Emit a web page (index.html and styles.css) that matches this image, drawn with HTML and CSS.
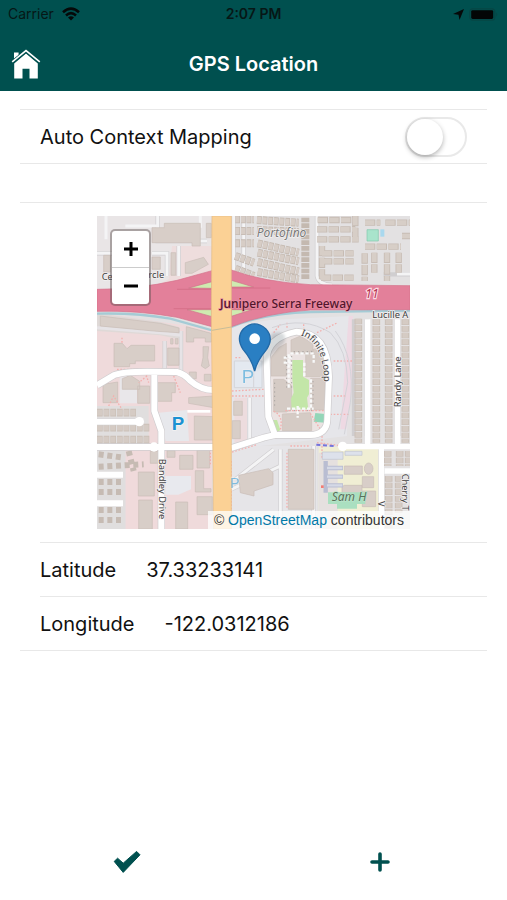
FILE: index.html
```html
<!DOCTYPE html>
<html lang="en">
<head>
<meta charset="utf-8">
<meta name="viewport" content="width=device-width, initial-scale=1">
<title>GPS Location</title>
<link rel="stylesheet" href="styles.css">
</head>
<body>
<header class="top">
  <div class="status">
    <div class="carrier">Carrier
      <svg width="18" height="14" viewBox="0 0 18 14" aria-hidden="true"><g fill="none" stroke="#050909" stroke-width="2.6"><path d="M1 5.2Q9-2 17 5.2"/><path d="M4 8.4Q9 4 14 8.4"/></g><path d="M6 10.4Q9 8 12 10.4L9 13.6z" fill="#050909"/></svg>
    </div>
    <time class="clock">2:07 PM</time>
    <div class="indicators">
      <svg width="13" height="13" viewBox="0 0 13 13" aria-hidden="true"><path d="M12 1L7.5 12 6.5 6.8 1 6z" fill="#050909"/></svg>
      <svg width="30" height="13" viewBox="0 0 30 13" aria-hidden="true"><rect x=".8" y=".8" width="25" height="11.4" rx="3" fill="none" stroke="#064544" stroke-width="1.2"/><rect x="2.2" y="2.2" width="22" height="8.8" rx="1.4" fill="#030606"/><path d="M27.3 4.4q2 2 0 4z" fill="#064544"/></svg>
    </div>
  </div>
  <nav class="nav">
    <a class="home" href="#" aria-label="Home">
      <svg width="30" height="30" viewBox="0 0 30 30" aria-hidden="true"><path d="M3 3.5h4.6v5L3 12z" fill="#fff"/><path d="M15 4.6L3.2 14.4v15h8.3v-9.6h7v9.6h8.3v-15z" fill="#fff"/><path d="M1.2 13.1L15 2l13.8 11.1" fill="none" stroke="#00504f" stroke-width="3.4"/><path d="M1.2 12.8L15 1.6l13.8 11.2" fill="none" stroke="#fff" stroke-width="1.6"/></svg>
    </a>
    <h1>GPS Location</h1>
  </nav>
</header>

<main class="content">
  <div class="row toggle-row">
    <label for="auto">Auto Context Mapping</label>
    <input class="switch" id="auto" type="checkbox" role="switch">
  </div>

  <section class="location">
    <div class="map">
      <svg class="tiles" viewBox="0 0 939 939" role="img" aria-label="Street map">
        <defs>
          <path id="loop-label" d="M611 358Q688 384 680 520"/>
        </defs>
        <rect width="939" height="939" fill="#e3e1e2"/>
        <!-- land use -->
        <path d="M0 0H343V220H0z" fill="#e9e5e6"/>
        <path d="M225 90H343V165L170 212 215 190z" fill="#eedddd"/>
        <path d="M0 290L345 340V939H85V690H0V640H150V580H0z" fill="#efdadb"/>
        <path d="M0 292L190 318 248 334V370L190 358 0 345z" fill="#dfd9d7"/>
        <path d="M0 570H155V690H85V939H0z" fill="#e0dede"/>
        <path d="M88 700H175V939H88z" fill="#f0dadb"/>
        <path d="M403 330L520 312 760 300 750 660 403 700z" fill="#e6e6ea"/>
        <path d="M403 690H660V939H403z" fill="#e6e5e8"/>
        <path d="M665 692H850V939H665z" fill="#f0eed4"/>
        <path d="M665 710H722V939H665z" fill="#e5e0df"/>
        <path d="M755 300H768V500L748 640H730z" fill="#eed9e3"/>
        <path d="M186 590L270 582 276 675H206z" fill="#e7e8ec"/>
        <path d="M205 780H282V820L244 836H205z" fill="#e8e9ee"/>
        <path d="M68 485Q95 470 120 500V562H68z" fill="#e9e7ea"/>
        <path d="M412 435H495V515H412z" fill="#e4e9f0" stroke="#d3d5da" stroke-width="3"/>
        <path d="M412 545H450V680H412z" fill="#eddcde"/>

        <!-- parking aisles -->
        <g fill="none" stroke="#d0ced0" stroke-width="13">
          <path d="M182 0V75H330M0 112H105M165 112H210V180M245 90V180"/>
          <path d="M410 0V170M440 0V180M660 0V180Q665 206 705 207M860 175H939M771 310V660M810 310V660M905 310V660M850 700V939M860 765H939"/>
          <path d="M550 700V939M650 690V939M415 790L530 700M403 820L550 750M252 345V470M203 375V470M458 545V680"/>
        </g>
        <g fill="none" stroke="#f4f4f5" stroke-width="9">
          <path d="M182 0V75H330M0 112H105M165 112H210V180M245 90V180M27 0V70M310 0V35M85 30H180"/>
          <path d="M410 0V170M440 0V180M660 0V180Q665 206 705 207M900 174H939"/>
          <path d="M550 700V939M650 690V939M415 790L530 700M403 820L550 750M458 545V680"/>
        </g>
        <g fill="none" stroke="#e6e3e6" stroke-width="9">
          <path d="M252 345V470M203 375V470M0 335L190 350 250 358"/>
        </g>

        <!-- buildings -->
        <g fill="#d8cec8" stroke="#c8bdb7" stroke-width="2">
          <path d="M202 22H310V90H285V80H165V35H202zM328 22H343V65H328z"/>
          <path d="M265 140L320 124 334 145 285 172 265 172zM165 123H190V160H165zM222 110H236V178H222zM20 118H40V168H20z"/>
          <path d="M10 300L190 322 246 336V350L180 346 10 330zM51 382H76L90 398 102 388H173V435H115V443H98V452H51zM212 396H246V448H212zM221 368H228V384H221zM235 368H243V384H235zM268 332L343 352V378H325V366H290V378H268zM318 392H335L332 425 337 450 325 458 313 450 318 425z"/>
          <path d="M18 505L62 498V560H18zM76 488L100 478 128 496V520H76zM122 510H158V562H122zM180 500H235V530H224V556H180zM275 545L350 540V575L275 562zM292 600L350 602V672H292zM277 468H298V488H277zM322 475H342V495H322z"/>
          <path d="M124 768H172V840H124zM125 852H166V939H125zM160 706H200V742H160zM210 704H234V724H210zM248 718H288V760H248zM300 702H338V756H300zM295 764H320V818H342V828H295zM300 842H346V896H300zM236 858H272V939H236z"/>
          <path d="M410 556H436V598H410zM406 614H430V668H406zM425 778L515 758 528 770V806L471 825V840L430 830z"/>
          <path d="M574 700H651V880H574zM556 623H643V645H556z"/>
          <ellipse cx="815" cy="758" rx="13" ry="17"/>
          <path d="M742 750H796V775H742zM742 808H795V830L768 865H735V812zM796 782H830V815H796zM796 825H836V872H796z"/>
        </g>

        <!-- house rows -->
        <g fill="none" stroke="#c4b9b0" stroke-width="24" stroke-dasharray="14 3">
          <path d="M480 12L605 20M480 42L605 48M482 82L605 110M482 110L605 136M482 138L605 166M482 168L605 190"/>
          <path d="M625 5V190M415 10H471M415 45H471M415 82H471M415 120L471 140M415 158L471 180"/>
        </g>
        <g fill="none" stroke="#d7cdc6" stroke-width="19" stroke-dasharray="12 5">
          <path d="M480 12L605 20M480 42L605 48M482 82L605 110M482 110L605 136M482 138L605 166M482 168L605 190"/>
          <path d="M415 10H471M415 45H471M415 82H471M415 120L471 140M415 158L471 180"/>
        </g>
        <g fill="none" stroke="#c7bcb4" stroke-width="19" stroke-dasharray="31 4">
          <path d="M662 12H770M660 40H775M660 70H785M675 112H770M675 136H770M672 185H770M775 0V75M804 92H912M804 20H850M865 20H939M675 90V190M803 112V195M832 110V170M870 110V195M905 110V170M915 60H939"/>
        </g>
        <g fill="none" stroke="#d7cec7" stroke-width="14" stroke-dasharray="28 7">
          <path d="M662 12H770M660 40H775M660 70H785M675 112H770M675 136H770M672 185H770M775 0V75M804 92H912M804 20H850M865 20H939M675 90V190M803 112V195M832 110V170M870 110V195M905 110V170M915 60H939"/>
        </g>
        <g fill="none" stroke="#cbc0b8" stroke-width="23" stroke-dasharray="17 3">
          <path d="M784 308V680M838 310V680M875 310V680M925 310V680M872 705V750M908 705V750M935 705V750M875 780V939M905 780V890M0 590H120M0 635H160M0 671H160"/>
        </g>
        <g fill="none" stroke="#d5cbc4" stroke-width="17" stroke-dasharray="15 5">
          <path d="M784 308V680M838 310V680M875 310V680M925 310V680M872 705V750M908 705V750M935 705V750M875 780V939M905 780V890M0 590H120M0 635H160M0 671H160"/>
        </g>
        <g fill="none" stroke="#c6bbb3" stroke-width="18" stroke-dasharray="15 11">
          <path d="M5 715L80 725M5 752L140 745M5 798H75M5 828H75M5 882H75M5 912H75M95 705L110 765"/>
        </g>

        <!-- campus -->
        <path d="M509 432Q520 365 599 347 690 350 696 482L689 622 659 652 534 657 514 602z" fill="#ebe3e2"/>
        <g fill="#d5cbc5" stroke="#cbc0ba" stroke-width="2">
          <path d="M522 425L545 395 568 382V480H522zM582 372L610 360 648 384V412H582zM626 412L655 398 680 425 684 482H626zM530 490H560L584 508V580L568 588H530zM641 487H684V582H641zM556 594L640 590 644 612V644H556z"/>
        </g>
        <path d="M586 432H618V482L636 492V535L630 545 634 580H584L582 548 590 530 586 490zM525 612H540L550 642 538 650 528 640z" fill="#c3e6a8"/>
        <g fill="none" stroke="#f8f9f9" stroke-width="7" stroke-dasharray="10 5">
          <path d="M575 415V520M560 425H590M580 412H650V440M622 440V480M642 490V575M570 578H650M602 570V605M560 440H590"/>
        </g>
        <g fill="none" stroke="#a9a4a2" stroke-width="3" stroke-dasharray="4 9">
          <path d="M569 420V520M584 420V520M590 407H648M648 495V570M577 584H645M533 500V575"/>
        </g>
        <path d="M655 591L684 594V620L650 617z" fill="#93d6b8"/>
        <path d="M810 41H844V75H810z" fill="#a9e4cc" stroke="#83c7ad" stroke-width="2"/>
        <path d="M850 40H862V62H850z" fill="#a9d8ee"/>

        <!-- footpaths -->
        <g fill="none" stroke="#f3b0ae" stroke-width="4" stroke-dasharray="5 5">
          <path d="M60 460H240M75 380V365M145 468L155 500M150 480L125 500M230 480L250 530M35 570L50 540 75 580M340 690V750M405 690L471 666M405 708L480 686M405 540H500M405 525L500 520M415 425H430M403 735V900"/>
          <path d="M530 350L550 325M570 320V340M620 325V340M660 350L722 320M710 435H770M700 540H750M700 595H760M518 480V600M530 585Q560 600 550 640M565 584H690M692 490V640M570 710V880M675 640V730M640 592L670 640M565 652H650"/>
          <path d="M505 668L660 650M660 680L740 690M580 690H640"/>
        </g>

        <!-- school -->
        <path d="M676 708H738V730H676zM744 706H795V718H744z" fill="#dde1eb" stroke="#c0c3d0" stroke-width="2"/>
        <path d="M686 735V830M690 756H738M690 782H738M690 808H738" fill="none" stroke="#b9bdd2" stroke-width="13"/>
        <path d="M690 756H736M690 782H736M690 808H736" fill="none" stroke="#d5d9e6" stroke-width="7"/>
        <path d="M693 829H805V864H780V878H720V864H693z" fill="#aadfc0"/>
        <path d="M672 808h8v8h-8z" fill="#f27c74"/>

        <!-- local streets -->
        <g fill="none" stroke="#cfcdcf" stroke-width="22" stroke-linejoin="round">
          <path d="M0 508L50 478Q75 467 150 467L240 468Q262 474 280 494 312 522 350 522M172 470V585L193 645V939M0 617H125M0 693H350"/>
          <path d="M403 696L500 665 534 657H640Q690 655 691 610L696 482Q694 350 599 347 509 365 509 432L514 602 534 657"/>
        </g>
        <g fill="none" stroke="#fff" stroke-width="18" stroke-linejoin="round">
          <path d="M0 508L50 478Q75 467 150 467L240 468Q262 474 280 494 312 522 350 522M172 470V585L193 645V939M0 617H125M0 693H350M0 776H78M0 862H78"/>
          <path d="M403 696L500 665 534 657H640Q690 655 691 610L696 482Q694 350 599 347 509 365 509 432L514 602 534 657"/>
          <path d="M735 692H939M812 310V690M902 310V690M853 700V939M862 765H939" stroke-width="16"/>
          <path d="M271 586H340" stroke-width="8"/>
        </g>
        <g fill="none" stroke="#d3d3d8" stroke-width="3">
          <path d="M525 335Q620 300 700 350 750 400 752 500L725 640M715 345Q775 425 760 560L742 655M470 440V515"/>
        </g>
        <circle cx="127" cy="617" r="14" fill="#fff"/><circle cx="171" cy="693" r="14" fill="#fff"/><circle cx="737" cy="691" r="14" fill="#fff"/>
        <path d="M658 686L712 690" stroke="#7473dc" stroke-width="6" stroke-dasharray="12 8"/>

        <!-- freeway -->
        <path d="M0 293Q120 290 220 308L345 343 403 333Q500 292 640 288L939 284" fill="none" stroke="#a5cbd5" stroke-width="7"/>
        <path d="M0 220Q120 220 240 193L345 164 403 162Q500 198 640 206L939 209V281L640 282Q510 290 403 332H345L240 304Q120 282 0 286z" fill="#e3809a" stroke="#d56f89" stroke-width="2"/>
        <path d="M275 216L345 197V217zM270 281H345V302zM403 193L470 213H403zM403 281H465L403 301z" fill="#cfebb0" stroke="#cd718a" stroke-width="2"/>
        <path d="M240 220H345M230 278H345M403 216H520M403 279H520" stroke="#d06882" stroke-width="2"/>
        <path d="M345 0H403L403 939H350L343 300z" fill="#fbd195" stroke="#e5bb85" stroke-width="2"/>
        <path d="M345 343L403 333" stroke="#c8bd99" stroke-width="3"/>

        <!-- labels -->
        <g class="labels">
          <text x="479" y="62" class="place">Portofino</text>
          <text x="14" y="193">Ce</text>
          <text x="154" y="186">rcle</text>
          <text x="369" y="276" class="freeway">Junipero Serra Freeway</text>
          <text x="805" y="246" class="shield">11</text>
          <text x="826" y="306">Lucille A</text>
          <text><textPath href="#loop-label">Infinite Loop</textPath></text>
          <text transform="translate(912 574) rotate(-90)">Randy Lane</text>
          <text transform="translate(186 728) rotate(90)">Bandley Drive</text>
          <text transform="translate(914 773) rotate(90)">Cherry T</text>
          <text transform="translate(844 855) rotate(90)">V</text>
          <text x="704" y="856" class="park">Sam H</text>
          <text x="224" y="642" class="parking">P</text>
          <text x="434" y="500" class="parking faded">P</text>
          <text x="400" y="815" class="parking faded small">P</text>
        </g>

        <!-- marker -->
        <path d="M478 464L562 380Q574 340 525 352z" fill="#34464e" opacity=".2" class="shadow"/>
        <path d="M473 465Q464 430 438 400 416 366 439 339 472 309 506 338 532 366 509 400 480 434 473 465z" fill="#2a7fc3" stroke="#2169a7" stroke-width="4"/>
        <circle cx="473" cy="368" r="16" fill="#fff"/>
      </svg>
      <div class="zoom">
        <button type="button" aria-label="Zoom in"><svg width="16" height="16" viewBox="0 0 16 16" aria-hidden="true"><path d="M1 8h14M8 1v14" stroke="#000" stroke-width="3"/></svg></button>
        <button type="button" aria-label="Zoom out"><svg width="16" height="16" viewBox="0 0 16 16" aria-hidden="true"><path d="M1 8h14" stroke="#000" stroke-width="3"/></svg></button>
      </div>
      <div class="credit">© <a href="#">OpenStreetMap</a> contributors</div>
    </div>
    <dl class="coords">
      <div class="coord"><dt>Latitude</dt><dd>37.33233141</dd></div>
      <div class="coord"><dt>Longitude</dt><dd>-122.0312186</dd></div>
    </dl>
  </section>
</main>

<footer class="actions">
  <button type="button" aria-label="Confirm"><svg width="28" height="24" viewBox="0 0 28 24" aria-hidden="true"><path d="M1.2 11.4L4.6 8.2 10.2 13.2 23.6 1.4 27 4.8 10.2 22.4z" fill="#00504f" stroke="#00504f" stroke-linejoin="round"/></svg></button>
  <button type="button" aria-label="Add"><svg width="20" height="20" viewBox="0 0 20 20" aria-hidden="true"><path d="M2 10h16M10 2v16" stroke="#00504f" stroke-width="3.6" stroke-linecap="round"/></svg></button>
</footer>
</body>
</html>
```
FILE: styles.css
```css
* {
  box-sizing: border-box;
}

body {
  margin: 0;
  min-height: 100vh;
  display: flex;
  flex-direction: column;
  background: #fff;
  color: #111;
  font-family: Inter, "Liberation Sans", sans-serif;
  font-size: 20px;
  line-height: 24px;
}

button {
  margin: 0;
  padding: 0;
  border: 0;
  background: none;
}

svg {
  display: block;
}

.top {
  background: #00504f;
}

.status {
  display: grid;
  grid-template-columns: 1fr auto 1fr;
  align-items: center;
  height: 28px;
  padding: 0 8px;
  color: #061716;
  font-size: 14px;
}

.carrier {
  display: flex;
  align-items: center;
  gap: 8px;
}

.clock {
  font-size: 14px;
  font-weight: 600;
}

.indicators {
  display: flex;
  justify-content: flex-end;
  align-items: center;
  gap: 4px;
}

.nav {
  display: grid;
  grid-template-columns: 1fr auto 1fr;
  align-items: center;
  height: 63px;
  padding: 9px 11px 0;
  color: #fff;
}

.home {
  justify-self: start;
}

.nav h1 {
  margin: 0;
  font-size: 20px;
  font-weight: 600;
}

.content {
  flex: 1;
  padding: 18px 20px 0;
}

.row {
  display: flex;
  align-items: center;
  justify-content: space-between;
  height: 55px;
  padding: 0 20px;
  border-top: 1px solid #e8e8e8;
  border-bottom: 1px solid #e8e8e8;
}

.switch {
  appearance: none;
  display: flex;
  width: 62px;
  height: 40px;
  margin: 0;
  border: 2px solid #e9e9e9;
  border-radius: 20px;
  background: #fff;
}

.switch::before {
  content: "";
  width: 36px;
  height: 36px;
  border-radius: 50%;
  background: #fff;
  box-shadow: 0 2px 5px rgba(0, 0, 0, 0.3);
}

.switch:checked {
  justify-content: flex-end;
  background: #00504f;
}

.location {
  margin-top: 38px;
  padding-top: 13px;
  border-top: 1px solid #e8e8e8;
  border-bottom: 1px solid #e8e8e8;
}

.map {
  position: relative;
  width: 100%;
  max-width: 313px;
  margin: 0 auto;
  overflow: hidden;
}

.tiles {
  width: 100%;
  height: auto;
}

.labels {
  fill: #3d3d3d;
  stroke: #f4f2f2;
  stroke-width: 4px;
  paint-order: stroke;
  font-family: "Noto Sans", sans-serif;
  font-size: 28px;
}

.place {
  font-size: 36px;
  font-style: italic;
  fill: #777;
}

.freeway {
  font-size: 36px;
  font-weight: 500;
  fill: #52162c;
  stroke: #e98ba3;
}

.shield {
  font-size: 36px;
  font-style: italic;
  fill: #b4304e;
  stroke: #fbdce3;
  stroke-width: 7px;
}

.park {
  font-size: 36px;
  font-style: italic;
  fill: #59705a;
  stroke: #b9e3c9;
}

.parking {
  font-family: "Liberation Sans", sans-serif;
  font-size: 56px;
  font-weight: 700;
  fill: #1b92d2;
}

.faded {
  font-weight: 400;
  opacity: 0.5;
}

.small {
  font-size: 42px;
}

.shadow {
  filter: blur(5px);
}

.zoom {
  position: absolute;
  top: 13px;
  left: 13px;
  border: 2px solid rgba(90, 80, 80, 0.45);
  border-radius: 5px;
  background: #fff;
  background-clip: padding-box;
}

.zoom button {
  display: grid;
  place-items: center;
  width: 37px;
  height: 36px;
}

.zoom button + button {
  height: 37px;
  border-top: 1px solid #ccc;
}

.credit {
  position: absolute;
  right: 0;
  bottom: 0;
  padding: 0 6px;
  background: rgba(255, 255, 255, 0.75);
  color: #333;
  font-family: "Liberation Sans", sans-serif;
  font-size: 14px;
  line-height: 18px;
  white-space: nowrap;
}

.credit a {
  color: #0078a8;
  text-decoration: none;
}

.coords {
  margin: 13px 0 0 20px;
}

.coord {
  display: flex;
  align-items: center;
  gap: 30px;
  height: 54px;
  border-top: 1px solid #e8e8e8;
}

.coord dd {
  margin: 0;
}

.actions {
  display: grid;
  grid-template-columns: 1fr 1fr;
  height: 76px;
}

.actions button {
  display: grid;
  place-items: center;
}
```
